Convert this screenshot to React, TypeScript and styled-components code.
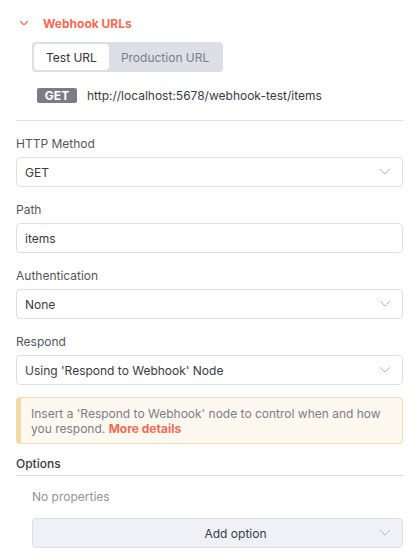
import React from "react";
import styled, { createGlobalStyle } from "styled-components";

const Global = createGlobalStyle`
  html, body { margin: 0; padding: 0; background: #ffffff; }
  body { font-family: Inter, "Open Sans", "Liberation Sans", sans-serif; color: #3a3a44; }
  * { box-sizing: border-box; }
`;

const Page = styled.div`
  width: 419px;
  padding: 12px 16px 12px 16px;
  display: flex;
  flex-direction: column;
`;

const Header = styled.div`
  display: flex;
  align-items: center;
  height: 20px;
  margin-top: 1px;
  padding-left: 4px;
  gap: 15px;
  color: #f26b57;
  font-size: 12px;
  font-weight: 700;
`;

const Tabs = styled.div`
  margin: 9px 0 0 16px;
  align-self: flex-start;
  display: flex;
  padding: 2px;
  background: #dcdfe8;
  border-radius: 4px;
  height: 30px;
`;

const Tab = styled.div<{ $active?: boolean }>`
  display: flex;
  align-items: center;
  padding: 0 12px;
  border-radius: 4px;
  font-size: 12px;
  background: ${(p) => (p.$active ? "#ffffff" : "transparent")};
  color: ${(p) => (p.$active ? "#333340" : "#7d7d87")};
`;

const UrlRow = styled.div`
  display: flex;
  align-items: center;
  gap: 10px;
  margin: 16px 0 0 21px;
  height: 15px;
`;

const Badge = styled.span`
  display: inline-flex;
  align-items: center;
  justify-content: center;
  width: 40px;
  height: 15px;
  background: #7b7c86;
  color: #fff;
  font-size: 12px;
  font-weight: 700;
  border-radius: 2px;
`;

const UrlText = styled.span`
  font-size: 12px;
  color: #3a3a44;
`;

const Divider = styled.div<{ $mt: number }>`
  height: 1px;
  background: #dcdfe8;
  margin-top: ${(p) => p.$mt}px;
`;

const Field = styled.div`
  display: flex;
  flex-direction: column;
  gap: 4px;
  margin-top: 14px;
`;

const Label = styled.div`
  font-size: 12px;
  line-height: 18px;
  color: #555560;
`;

const Box = styled.div`
  height: 30px;
  border: 1px solid #dcdfe8;
  border-radius: 4px;
  display: flex;
  align-items: center;
  justify-content: space-between;
  padding: 0 12px 0 8px;
  font-size: 12px;
  color: #3a3a44;
  background: #fff;
`;

const Notice = styled.div`
  margin-top: 12px;
  background: #fdf8f0;
  border: 1px solid #f3dcae;
  border-left: 5px solid #f3d9a6;
  border-radius: 4px;
  padding: 8px 10px 7px 10px;
  font-size: 12px;
  line-height: 15px;
  color: #7d7d87;
`;

const Link = styled.span`
  color: #f26b57;
  font-weight: 700;
`;

const SectionTitle = styled.div`
  margin-top: 11px;
  font-size: 12px;
  line-height: 18px;
  font-weight: 500;
  color: #3a3a44;
`;

const Empty = styled.div`
  margin: 12px 0 0 16px;
  font-size: 12px;
  line-height: 18px;
  color: #909399;
`;

const AddButton = styled.div`
  margin: 12px 0 0 16px;
  height: 30px;
  border: 1px solid #dcdfe8;
  border-radius: 4px;
  background: #f0f1f6;
  display: flex;
  align-items: center;
  padding: 0 12px 0 58px;
  font-size: 12px;
  color: #3a3a44;
`;

const AddLabel = styled.span`
  flex: 1;
  text-align: center;
`;

const Chevron = ({ color = "#b4b7c2", w = 10, sw = 1 }: { color?: string; w?: number; sw?: number }) => (
  <svg width={w} height={w * 0.6} viewBox="0 0 10 6" fill="none">
    <path d="M0.5 0.5 L5 5 L9.5 0.5" stroke={color} strokeWidth={sw} strokeLinecap="round" strokeLinejoin="round" />
  </svg>
);

export default function App() {
  return (
    <>
      <Global />
      <Page>
        <Header>
          <Chevron color="#f26b57" w={8} sw={1.6} />
          <span>Webhook URLs</span>
        </Header>
        <Tabs>
          <Tab $active>Test URL</Tab>
          <Tab>Production URL</Tab>
        </Tabs>
        <UrlRow>
          <Badge>GET</Badge>
          <UrlText>http://localhost:5678/webhook-test/items</UrlText>
        </UrlRow>
        <Divider $mt={17} />
        <Field>
          <Label>HTTP Method</Label>
          <Box>
            <span>GET</span>
            <Chevron />
          </Box>
        </Field>
        <Field>
          <Label>Path</Label>
          <Box>
            <span>items</span>
          </Box>
        </Field>
        <Field>
          <Label>Authentication</Label>
          <Box>
            <span>None</span>
            <Chevron />
          </Box>
        </Field>
        <Field>
          <Label>Respond</Label>
          <Box>
            <span>Using 'Respond to Webhook' Node</span>
            <Chevron />
          </Box>
        </Field>
        <Notice>
          Insert a 'Respond to Webhook' node to control when and how you respond. <Link>More details</Link>
        </Notice>
        <SectionTitle>Options</SectionTitle>
        <Divider $mt={2} />
        <Empty>No properties</Empty>
        <AddButton>
          <AddLabel>Add option</AddLabel>
          <Chevron />
        </AddButton>
      </Page>
    </>
  );
}
